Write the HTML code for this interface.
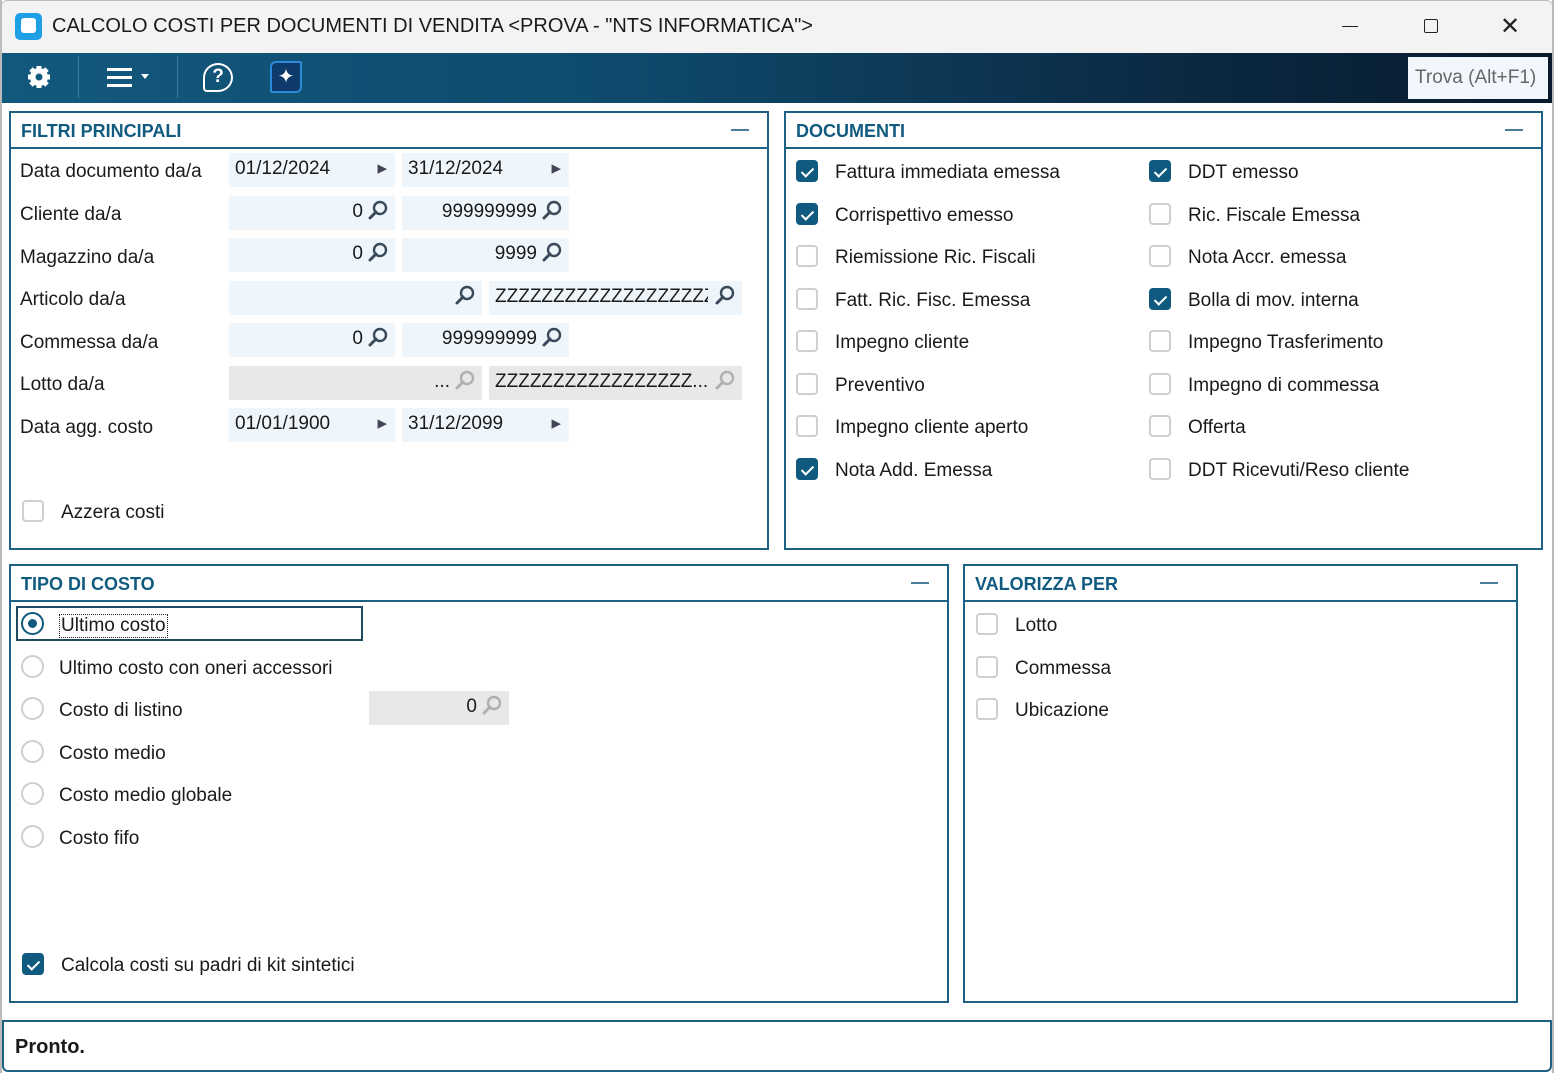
<!DOCTYPE html>
<html><head><meta charset="utf-8"><style>
*{box-sizing:border-box;margin:0;padding:0}
body{width:1554px;height:1073px;position:relative;background:#fff;font-family:"Liberation Sans","DejaVu Sans",sans-serif;color:#1a1a1a;overflow:hidden}
.a{position:absolute}
.title{left:0;top:0;width:1554px;height:53px;background:#f3f3f3;border:1px solid #bbb;border-bottom:none;border-radius:8px 8px 0 0}
.tb{left:2px;top:53px;width:1550px;height:50px;background:linear-gradient(90deg,#12597e 0%,#0f4a6c 40%,#0b2a44 75%,#081a2c 100%)}
.panel{border:2px solid #1d6184}
.ph{position:absolute;left:0;right:0;top:0;height:36px;border-bottom:2px solid #1d6184}
.ph span{position:absolute;left:10px;top:8px;font-weight:bold;font-size:18px;color:#115a80}
.ph i{position:absolute;right:18px;top:16px;width:18px;height:2px;background:#4a7e9c}
.lbl{font-size:19px;white-space:nowrap;margin-top:2px}
.f{background:#eef6fc;height:34px;font-size:19px;line-height:32px;padding:0 6px;white-space:nowrap;overflow:hidden}
.g{background:#e8e8e8}
.cb{width:22px;height:22px;border:2px solid #cfcfcf;border-radius:4px;background:#fff}
.cb.on{background:#0f5a7e;border-color:#0f5a7e}
.cb.on::after{content:"";position:absolute;left:6px;top:3px;width:5px;height:10px;border:solid #fff;border-width:0 2px 2px 0;transform:rotate(45deg)}
.rd{width:23px;height:23px;border:2px solid #cfcfcf;border-radius:50%;background:#fff}
svg.m{width:22px;height:22px;vertical-align:-4px;margin-left:4px}
</style></head><body>
<svg width="0" height="0" style="position:absolute"><defs><g id="mg"><circle cx="13" cy="9" r="6" fill="none" stroke-width="2.4"/><line x1="9" y1="13" x2="3" y2="19" stroke-width="3" stroke-linecap="round"/></g></defs></svg>
<div class="a title"></div>
<div class="a" style="left:15px;top:13px;width:27px;height:27px;background:#1ea0e6;border-radius:5px"></div>
<div class="a" style="left:21px;top:18px;width:15px;height:15px;background:#fff;border-radius:3px"></div>
<div class="a" style="left:52px;top:15px;font-size:20px;white-space:nowrap">CALCOLO COSTI PER DOCUMENTI DI VENDITA &lt;PROVA - "NTS INFORMATICA"&gt;</div>
<div class="a" style="left:1342px;top:26px;width:16px;height:1px;background:#222"></div>
<div class="a" style="left:1424px;top:19px;width:14px;height:14px;border:1.5px solid #222;border-radius:2px"></div>
<div class="a" style="left:1500px;top:12px;font-size:24px;color:#222">✕</div>
<div class="a tb"></div>
<svg class="a" style="left:24px;top:62px" width="30" height="30" viewBox="0 0 30 30"><g fill="#fff"><circle cx="15" cy="15" r="9"/><g stroke="#fff" stroke-width="5"><line x1="15" y1="4" x2="15" y2="26"/><line x1="4" y1="15" x2="26" y2="15"/><line x1="7" y1="7" x2="23" y2="23"/><line x1="23" y1="7" x2="7" y2="23"/></g></g><circle cx="15" cy="15" r="3.5" fill="#12597e"/></svg>
<div class="a" style="left:78px;top:56px;width:1px;height:42px;background:#3f7a9a"></div>
<div class="a" style="left:107px;top:68px;width:25px;height:3px;background:#fff;box-shadow:0 8px 0 #fff,0 16px 0 #fff"></div>
<div class="a" style="left:141px;top:74px;border:4px solid transparent;border-top:5px solid #fff"></div>
<div class="a" style="left:177px;top:56px;width:1px;height:42px;background:#3f7a9a"></div>
<div class="a" style="left:203px;top:63px;width:30px;height:29px;border:2.5px solid #fff;border-radius:50% 50% 50% 4px;color:#fff;font-size:19px;font-weight:bold;text-align:center;line-height:24px">?</div>
<div class="a" style="left:270px;top:61px;width:32px;height:32px;background:#0d3a6a;border:2px solid #2a8ad8;border-radius:6px 2px 6px 2px;color:#fff;font-size:20px;text-align:center;line-height:28px">✦</div>
<div class="a" style="left:1408px;top:57px;width:140px;height:42px;background:#f1f7fd;font-size:19px;color:#666;padding:10px 0 0 7px">Trova (Alt+F1)</div>

<!-- FILTRI -->
<div class="a panel" style="left:9px;top:111px;width:760px;height:439px"><div class="ph"><span>FILTRI PRINCIPALI</span><i></i></div></div>
<div class="a lbl" style="left:20px;top:159px">Data documento da/a</div>
<div class="a lbl" style="left:20px;top:202px">Cliente da/a</div>
<div class="a lbl" style="left:20px;top:245px">Magazzino da/a</div>
<div class="a lbl" style="left:20px;top:287px">Articolo da/a</div>
<div class="a lbl" style="left:20px;top:330px">Commessa da/a</div>
<div class="a lbl" style="left:20px;top:372px">Lotto da/a</div>
<div class="a lbl" style="left:20px;top:415px">Data agg. costo</div>

<div class="a f" style="left:229px;top:153px;width:166px">01/12/2024<span style="position:absolute;right:8px;color:#445">▸</span></div>
<div class="a f" style="left:402px;top:153px;width:167px">31/12/2024<span style="position:absolute;right:8px;color:#445">▸</span></div>
<div class="a f" style="left:229px;top:196px;width:166px;text-align:right">0<svg class="m" stroke="#3a4a5a"><use href="#mg"/></svg></div>
<div class="a f" style="left:402px;top:196px;width:167px;text-align:right">999999999<svg class="m" stroke="#3a4a5a"><use href="#mg"/></svg></div>
<div class="a f" style="left:229px;top:238px;width:166px;text-align:right">0<svg class="m" stroke="#3a4a5a"><use href="#mg"/></svg></div>
<div class="a f" style="left:402px;top:238px;width:167px;text-align:right">9999<svg class="m" stroke="#3a4a5a"><use href="#mg"/></svg></div>
<div class="a f" style="left:229px;top:281px;width:253px;text-align:right"><svg class="m" stroke="#3a4a5a"><use href="#mg"/></svg></div>
<div class="a f" style="left:489px;top:281px;width:253px">ZZZZZZZZZZZZZZZZZZZ<span style="position:absolute;right:0;top:0;background:#eef6fc;padding:0 6px 0 2px"><svg class="m" stroke="#3a4a5a"><use href="#mg"/></svg></span></div>
<div class="a f" style="left:229px;top:323px;width:166px;text-align:right">0<svg class="m" stroke="#3a4a5a"><use href="#mg"/></svg></div>
<div class="a f" style="left:402px;top:323px;width:167px;text-align:right">999999999<svg class="m" stroke="#3a4a5a"><use href="#mg"/></svg></div>
<div class="a f g" style="left:229px;top:366px;width:253px;text-align:right">...<svg class="m" stroke="#b0b0b0"><use href="#mg"/></svg></div>
<div class="a f g" style="left:489px;top:366px;width:253px">ZZZZZZZZZZZZZZZZZ...<span style="position:absolute;right:6px;top:0"><svg class="m" stroke="#b0b0b0"><use href="#mg"/></svg></span></div>
<div class="a f" style="left:229px;top:408px;width:166px">01/01/1900<span style="position:absolute;right:8px;color:#445">▸</span></div>
<div class="a f" style="left:402px;top:408px;width:167px">31/12/2099<span style="position:absolute;right:8px;color:#445">▸</span></div>
<div class="a cb" style="left:22px;top:500px"></div>
<div class="a lbl" style="left:61px;top:500px">Azzera costi</div>

<!-- DOCUMENTI -->
<div class="a panel" style="left:784px;top:111px;width:759px;height:439px"><div class="ph"><span>DOCUMENTI</span><i></i></div></div>
<div class="a cb on" style="left:796px;top:160px"></div><div class="a lbl" style="left:835px;top:160px">Fattura immediata emessa</div>
<div class="a cb on" style="left:796px;top:203px"></div><div class="a lbl" style="left:835px;top:203px">Corrispettivo emesso</div>
<div class="a cb" style="left:796px;top:245px"></div><div class="a lbl" style="left:835px;top:245px">Riemissione Ric. Fiscali</div>
<div class="a cb" style="left:796px;top:288px"></div><div class="a lbl" style="left:835px;top:288px">Fatt. Ric. Fisc. Emessa</div>
<div class="a cb" style="left:796px;top:330px"></div><div class="a lbl" style="left:835px;top:330px">Impegno cliente</div>
<div class="a cb" style="left:796px;top:373px"></div><div class="a lbl" style="left:835px;top:373px">Preventivo</div>
<div class="a cb" style="left:796px;top:415px"></div><div class="a lbl" style="left:835px;top:415px">Impegno cliente aperto</div>
<div class="a cb on" style="left:796px;top:458px"></div><div class="a lbl" style="left:835px;top:458px">Nota Add. Emessa</div>
<div class="a cb on" style="left:1149px;top:160px"></div><div class="a lbl" style="left:1188px;top:160px">DDT emesso</div>
<div class="a cb" style="left:1149px;top:203px"></div><div class="a lbl" style="left:1188px;top:203px">Ric. Fiscale Emessa</div>
<div class="a cb" style="left:1149px;top:245px"></div><div class="a lbl" style="left:1188px;top:245px">Nota Accr. emessa</div>
<div class="a cb on" style="left:1149px;top:288px"></div><div class="a lbl" style="left:1188px;top:288px">Bolla di mov. interna</div>
<div class="a cb" style="left:1149px;top:330px"></div><div class="a lbl" style="left:1188px;top:330px">Impegno Trasferimento</div>
<div class="a cb" style="left:1149px;top:373px"></div><div class="a lbl" style="left:1188px;top:373px">Impegno di commessa</div>
<div class="a cb" style="left:1149px;top:415px"></div><div class="a lbl" style="left:1188px;top:415px">Offerta</div>
<div class="a cb" style="left:1149px;top:458px"></div><div class="a lbl" style="left:1188px;top:458px">DDT Ricevuti/Reso cliente</div>

<!-- TIPO DI COSTO -->
<div class="a panel" style="left:9px;top:564px;width:940px;height:439px"><div class="ph"><span>TIPO DI COSTO</span><i></i></div></div>
<div class="a" style="left:16px;top:606px;width:347px;height:35px;border:2px solid #1d4a60"></div>
<div class="a rd" style="left:21px;top:612px;border-color:#0f5a7e"></div>
<div class="a" style="left:28px;top:619px;width:9px;height:9px;border-radius:50%;background:#0f5a7e"></div>
<div class="a lbl" style="left:59px;top:612px;border:1px dotted #222;padding:0 1px">Ultimo costo</div>
<div class="a rd" style="left:21px;top:655px"></div><div class="a lbl" style="left:59px;top:656px">Ultimo costo con oneri accessori</div>
<div class="a rd" style="left:21px;top:697px"></div><div class="a lbl" style="left:59px;top:698px">Costo di listino</div>
<div class="a f g" style="left:369px;top:691px;width:140px;text-align:right">0<svg class="m" stroke="#b0b0b0"><use href="#mg"/></svg></div>
<div class="a rd" style="left:21px;top:740px"></div><div class="a lbl" style="left:59px;top:741px">Costo medio</div>
<div class="a rd" style="left:21px;top:782px"></div><div class="a lbl" style="left:59px;top:783px">Costo medio globale</div>
<div class="a rd" style="left:21px;top:825px"></div><div class="a lbl" style="left:59px;top:826px">Costo fifo</div>
<div class="a cb on" style="left:22px;top:953px"></div><div class="a lbl" style="left:61px;top:953px">Calcola costi su padri di kit sintetici</div>

<!-- VALORIZZA -->
<div class="a panel" style="left:963px;top:564px;width:555px;height:439px"><div class="ph"><span>VALORIZZA PER</span><i></i></div></div>
<div class="a cb" style="left:976px;top:613px"></div><div class="a lbl" style="left:1015px;top:613px">Lotto</div>
<div class="a cb" style="left:976px;top:656px"></div><div class="a lbl" style="left:1015px;top:656px">Commessa</div>
<div class="a cb" style="left:976px;top:698px"></div><div class="a lbl" style="left:1015px;top:698px">Ubicazione</div>

<!-- STATUS -->
<div class="a" style="left:2px;top:1020px;width:1550px;height:52px;border:2px solid #1d6184;border-radius:0 0 6px 6px"></div>
<div class="a" style="left:15px;top:1036px;font-size:20px;font-weight:bold">Pronto.</div>
<div class="a" style="left:0;top:0;width:2px;height:1073px;background:#bbb"></div>
<div class="a" style="left:1552px;top:0;width:2px;height:1073px;background:#bbb"></div>
</body></html>
